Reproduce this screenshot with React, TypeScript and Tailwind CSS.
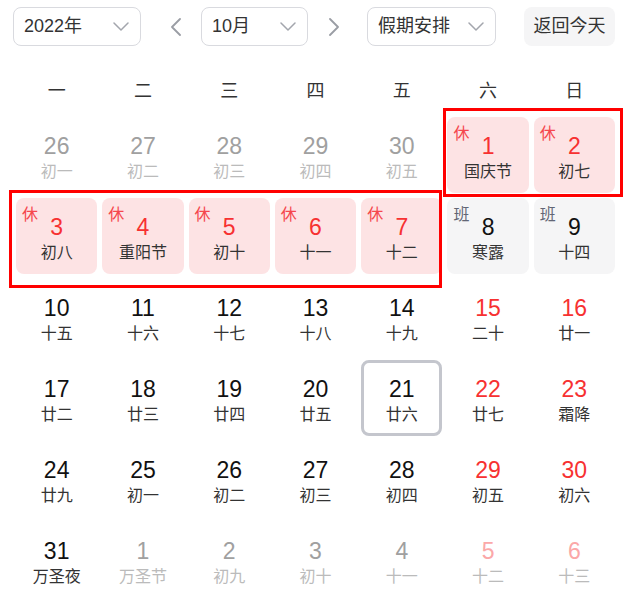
import React from "react";

type Cell = {
  d: number;
  l: string;
  kind?: "rest" | "work";
  other?: boolean;
  weekend?: boolean;
  today?: boolean;
};

const rows: Cell[][] = [
  [
    { d: 26, l: "初一", other: true },
    { d: 27, l: "初二", other: true },
    { d: 28, l: "初三", other: true },
    { d: 29, l: "初四", other: true },
    { d: 30, l: "初五", other: true },
    { d: 1, l: "国庆节", kind: "rest" },
    { d: 2, l: "初七", kind: "rest" },
  ],
  [
    { d: 3, l: "初八", kind: "rest" },
    { d: 4, l: "重阳节", kind: "rest" },
    { d: 5, l: "初十", kind: "rest" },
    { d: 6, l: "十一", kind: "rest" },
    { d: 7, l: "十二", kind: "rest" },
    { d: 8, l: "寒露", kind: "work" },
    { d: 9, l: "十四", kind: "work" },
  ],
  [
    { d: 10, l: "十五" },
    { d: 11, l: "十六" },
    { d: 12, l: "十七" },
    { d: 13, l: "十八" },
    { d: 14, l: "十九" },
    { d: 15, l: "二十", weekend: true },
    { d: 16, l: "廿一", weekend: true },
  ],
  [
    { d: 17, l: "廿二" },
    { d: 18, l: "廿三" },
    { d: 19, l: "廿四" },
    { d: 20, l: "廿五" },
    { d: 21, l: "廿六", today: true },
    { d: 22, l: "廿七", weekend: true },
    { d: 23, l: "霜降", weekend: true },
  ],
  [
    { d: 24, l: "廿九" },
    { d: 25, l: "初一" },
    { d: 26, l: "初二" },
    { d: 27, l: "初三" },
    { d: 28, l: "初四" },
    { d: 29, l: "初五", weekend: true },
    { d: 30, l: "初六", weekend: true },
  ],
  [
    { d: 31, l: "万圣夜" },
    { d: 1, l: "万圣节", other: true },
    { d: 2, l: "初九", other: true },
    { d: 3, l: "初十", other: true },
    { d: 4, l: "十一", other: true },
    { d: 5, l: "十二", other: true, weekend: true },
    { d: 6, l: "十三", other: true, weekend: true },
  ],
];

const cjk = "font-['Liberation_Sans','Noto_Sans_CJK_SC',sans-serif]";

function ChevronDown() {
  return (
    <svg width="16" height="9" viewBox="0 0 16 9" fill="none">
      <polyline points="1,1 8,8 15,1" stroke="#a3a6ad" strokeWidth="1.5" strokeLinecap="round" strokeLinejoin="round" />
    </svg>
  );
}

function Arrow({ dir }: { dir: "l" | "r" }) {
  return (
    <svg width="12" height="18" viewBox="0 0 12 18" fill="none">
      <polyline
        points={dir === "l" ? "10,1 2,9 10,17" : "2,1 10,9 2,17"}
        stroke="#9a9da4"
        strokeWidth="1.8"
        strokeLinecap="round"
        strokeLinejoin="round"
      />
    </svg>
  );
}

function Select({ text, w }: { text: string; w: string }) {
  return (
    <div
      className={`${w} h-[39px] flex items-center justify-between pl-[10px] pr-[11px] border border-[#d9dadf] rounded-[8px] bg-white text-[18px] text-[#333] ${cjk}`}
    >
      <span>{text}</span>
      <ChevronDown />
    </div>
  );
}

function DayCell({ c }: { c: Cell }) {
  let bg = "";
  if (c.kind === "rest") bg = "bg-[#fde3e4]";
  else if (c.kind === "work") bg = "bg-[#f5f5f6]";
  let numColor = "text-[#111]";
  let lunarColor = "text-[#333]";
  if (c.kind === "rest") numColor = "text-[#f73131]";
  else if (c.other && c.weekend) {
    numColor = "text-[#fba8a8]";
    lunarColor = "text-[#bbbbbb]";
  } else if (c.other) {
    numColor = "text-[#a0a0a0]";
    lunarColor = "text-[#bbbbbb]";
  } else if (c.weekend) numColor = "text-[#f73131]";
  const border = c.today ? "border-[3px] border-[#c4c6cd] pt-[14px]" : "pt-[17px]";
  return (
    <div className={`relative h-[76px] rounded-[8px] flex flex-col items-center ${bg} ${border}`}>
      {c.kind && (
        <span
          className={`absolute left-[6px] top-[7px] text-[16px] leading-[20px] ${cjk} ${
            c.kind === "rest" ? "text-[#f5474d]" : "text-[#626675]"
          }`}
        >
          {c.kind === "rest" ? "休" : "班"}
        </span>
      )}
      <span className={`text-[23px] leading-[24px] font-['Liberation_Sans',sans-serif] ${numColor}`}>{c.d}</span>
      <span className={`mt-[4px] text-[16px] leading-[20px] ${cjk} ${lunarColor}`}>{c.l}</span>
    </div>
  );
}

export default function App() {
  const weekdays = ["一", "二", "三", "四", "五", "六", "日"];
  return (
    <div className="relative w-[628px] h-[603px] bg-white overflow-hidden">
      <div className="flex items-center pt-[7px] pl-[13px]">
        <Select text="2022年" w="w-[128px]" />
        <div className="ml-[23px] w-[24px] flex justify-center">
          <Arrow dir="l" />
        </div>
        <div className="ml-[13px]">
          <Select text="10月" w="w-[107px]" />
        </div>
        <div className="ml-[14px] w-[24px] flex justify-center">
          <Arrow dir="r" />
        </div>
        <div className="ml-[21px]">
          <Select text="假期安排" w="w-[129px]" />
        </div>
        <div
          className={`ml-[28px] w-[91px] h-[39px] rounded-[8px] bg-[#f5f5f6] flex items-center justify-center text-[18px] text-[#333] ${cjk}`}
        >
          返回今天
        </div>
      </div>

      <div className="ml-[16px] w-[599px] mt-[30px] grid grid-cols-7 gap-x-[5px] h-[30px]">
        {weekdays.map((w) => (
          <div key={w} className={`flex items-center justify-center text-[18px] text-[#333] ${cjk}`}>
            {w}
          </div>
        ))}
      </div>

      <div className="ml-[16px] w-[599px] mt-[11px] grid grid-cols-7 gap-x-[5px] gap-y-[5px]">
        {rows.flat().map((c, i) => (
          <DayCell key={i} c={c} />
        ))}
      </div>

      <div className="absolute left-[443px] top-[108px] w-[180px] h-[89px] border-[3px] border-[#ff0000] pointer-events-none" />
      <div className="absolute left-[9px] top-[190px] w-[433px] h-[98px] border-[3px] border-[#ff0000] pointer-events-none" />
    </div>
  );
}
